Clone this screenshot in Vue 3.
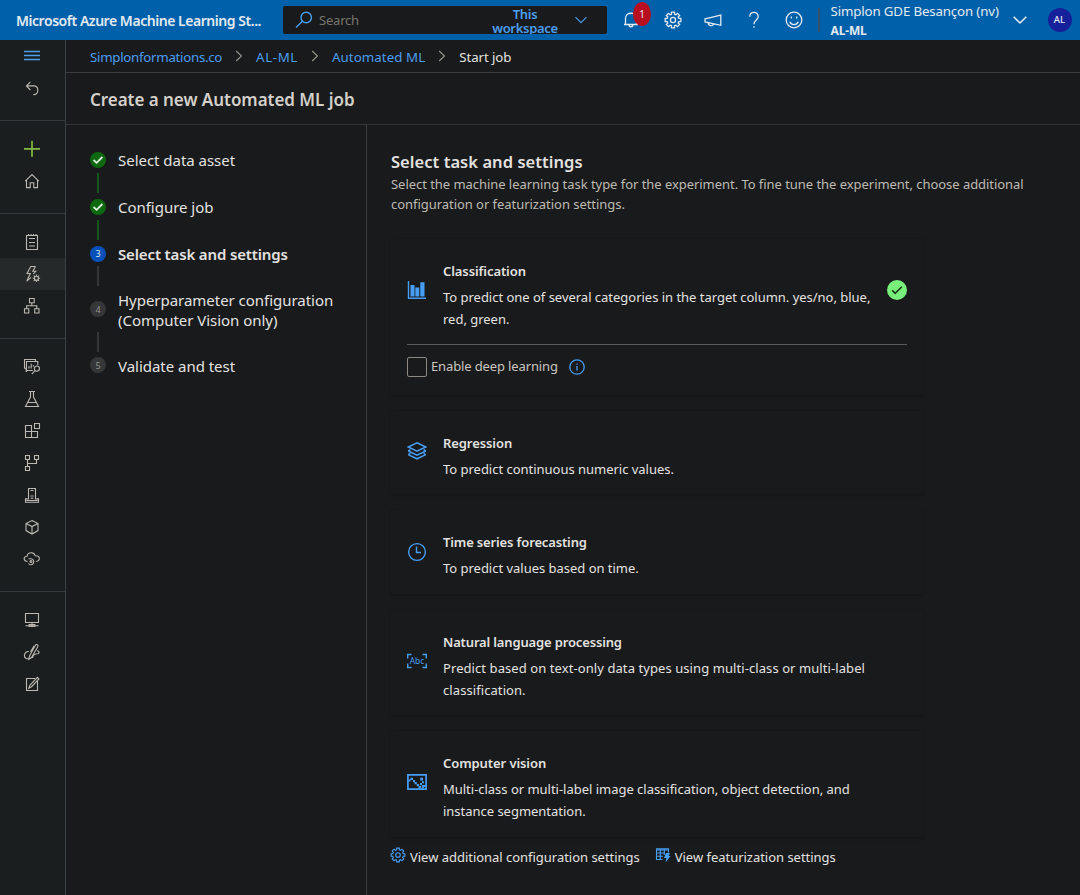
<script setup>
const gear = (cx, cy, ro, ri) => {
  const pts = []
  for (let i = 0; i < 8; i++) {
    const a = (i * Math.PI) / 4
    const add = (r, o) => pts.push(`${(cx + r * Math.cos(a + o)).toFixed(2)} ${(cy + r * Math.sin(a + o)).toFixed(2)}`)
    add(ri, -0.26)
    add(ro, -0.19)
    add(ro, 0.19)
    add(ri, 0.26)
  }
  return `M${pts.join('L')}Z`
}
const circle = (cx, cy, r) => `M${cx - r} ${cy}a${r} ${r} 0 1 0 ${2 * r} 0a${r} ${r} 0 1 0 ${-2 * r} 0`
const cog = (cx, cy, r, len) => {
  let d = circle(cx, cy, r)
  for (let i = 0; i < 8; i++) {
    const a = (i * Math.PI) / 4
    const p = (k) => `${(cx + k * Math.cos(a)).toFixed(2)} ${(cy + k * Math.sin(a)).toFixed(2)}`
    d += `M${p(r)}L${p(r + len)}`
  }
  return d
}

const navGroups = [
  [
    { id: 'menu', cls: 'menu', d: 'M2 5.5H18M2 9.5H18M2 13.5H18' },
    { id: 'back', d: 'M8.4 3.8 4.4 7.9 8.4 12M4.4 7.9H11.6C14.4 7.9 15.8 9.8 15.8 12.3 15.8 15 14.2 16.7 11.2 16.7' }
  ],
  [
    { id: 'new', cls: 'new', d: 'M2 9.8H18M10 1.8V17.8' },
    { id: 'home', d: 'M3.2 10.2 10 3.5 16.8 10.2M4.5 9.2V16.6H8.2V11.8H11.8V16.6H15.5V9.2' }
  ],
  [
    { id: 'notebooks', d: 'M4.5 3.5H15.5V17.5H4.5ZM6.5 2V4M9 2V4M11.5 2V4M14 2V4M7 6.5H13M7 10.5H13M7 14H13' },
    { id: 'automl', active: true, d: `M13.5 2.5H8.8L5 9.5H8.2L4.8 17.2 9 13.3M13.5 2.5 10.8 7.2H13.8L11.3 10${cog(14.4, 14.2, 2, 1.7)}` },
    { id: 'designer', d: 'M7.5 2.5H12.2V6.8H7.5ZM2.5 12.7H6.8V17H2.5ZM12.7 12.7H17V17H12.7ZM9.8 6.8V9.8M4.7 12.7V9.8H14.8V12.7' }
  ],
  [
    { id: 'data', d: `M5 14.5H4.2V11.2H2.5V2.5H13.5V4.3M10.8 13.5H4.5V4.5H15.8V8M7 11.5V9M9.2 11.5V6.8M11.3 9.5V8${circle(14.9, 11.6, 2.6)}M13 13.5 9.8 17.2` },
    { id: 'jobs', d: 'M7 2.5H13M8.5 2.5V8L3.5 17.5H16.5L11.5 8V2.5M5.5 13.5H14.5' },
    { id: 'components', d: 'M3.5 4.5H9.5V16.5H3.5ZM3.5 10.5H15.5V16.5H9.5M12.5 2.5H17.5V7.5H12.5Z' },
    { id: 'pipelines', d: 'M3.5 2.5H7.5V6.5H3.5ZM12.5 2.5H16.5V6.5H12.5ZM3.5 13.5H7.5V17.5H3.5ZM5.5 6.5V13.5M14.5 6.5V10.5H5.5' },
    { id: 'environments', d: 'M6.5 14.5V3.5H13.5V14.5M8.5 5.5H11.5M8.5 11H11.5M8.5 13.3H11.5M3.5 17.3V13.8H5V15.5H15V13.8H16.5V17.3Z' },
    { id: 'models', d: 'M10 3.5 16 6.5V13.6L10 17.1 4 13.6V6.5ZM4 6.5 10 9.6 16 6.5M10 9.6V17.1' },
    { id: 'endpoints', d: `M5.5 12.5C1 12.3 1.2 7.3 5 7.3 6 2.6 12.2 2.6 13.2 6.7 18.6 6.5 18.7 12.2 14 12.5M6.5 9.7H8.7A3 3 0 1 1 6.4 14.5${circle(9, 12.5, 1)}` }
  ],
  [
    { id: 'compute', d: 'M3.5 3.5H16.5V12.5H3.5ZM10 12.5V15.3M3.5 15.8H16.5M7.2 16.5V14.5H12.8V16.5Z' },
    { id: 'linked', d: 'M13.8 2.6C15.5 2 16.7 3.8 15.5 5.2L9.5 15.5 6.8 17.2 7.6 13.8ZM6.8 9.5C2.3 9 .8 15.5 4.8 16.7H6.8M12.2 3.8 8.5 9.8M15 8.8C17.5 8.5 17.8 11.5 15.6 11.8 12.5 12 10.6 13.5 10.6 16' },
    { id: 'labeling', d: 'M13 4.5H4.5V16.5H15.5V7M6.8 14.3 8 11 15.4 3.4 16.9 5 9.8 12.5Z' }
  ]
]

const crumbs = [
  { text: 'Simplonformations.co', cls: 'c1' },
  { text: 'AL-ML', cls: 'c2' },
  { text: 'Automated ML', cls: 'c3' },
  { text: 'Start job', cls: 'c4' }
]

const steps = [
  { text: 'Select data asset', state: 'done' },
  { text: 'Configure job', state: 'done' },
  { text: 'Select task and settings', state: 'current' },
  { text: 'Hyperparameter configuration (Computer Vision only)', state: 'todo' },
  { text: 'Validate and test', state: 'todo' }
]

const tasks = [
  { id: 'classification', title: 'Classification', desc: 'To predict one of several categories in the target column. yes/no, blue, red, green.', selected: true },
  { id: 'regression', title: 'Regression', desc: 'To predict continuous numeric values.' },
  { id: 'forecast', title: 'Time series forecasting', desc: 'To predict values based on time.' },
  { id: 'nlp', title: 'Natural language processing', desc: 'Predict based on text-only data types using multi-class or multi-label classification.' },
  { id: 'vision', title: 'Computer vision', desc: 'Multi-class or multi-label image classification, object detection, and instance segmentation.' }
]
</script>

<template>
  <div class="app">
    <header class="top">
      <div class="brand">Microsoft Azure Machine Learning St...</div>
      <div class="search">
        <svg class="mag" width="18" height="18" viewBox="0 0 18 18"><circle cx="11.2" cy="6.5" r="5.2" /><path d="M7.4 10.2 1 16.6" /></svg>
        <span class="placeholder">Search</span>
        <span class="scope">This workspace</span>
        <svg class="chev" width="14" height="8" viewBox="0 0 14 8"><path d="M1.5 1.2 7 6.7 12.5 1.2" /></svg>
      </div>
      <div class="tools">
        <div class="tool bell">
          <svg width="20" height="20" viewBox="0 0 20 20"><path d="M3 14.5H17M4.5 14.5V8.5C4.5 1.5 15.5 1.5 15.5 8.5V14.5M8 14.8C8 17.4 12 17.4 12 14.8" /></svg>
          <span class="badge">1</span>
        </div>
        <div class="tool"><svg width="20" height="20" viewBox="0 0 20 20"><path :d="gear(10, 10, 8, 6)" /><circle cx="10" cy="10" r="2.6" /></svg></div>
        <div class="tool"><svg width="20" height="20" viewBox="0 0 20 20"><path d="M2 8.8 17.8 5V15.3L2 12ZM5.3 12.8C5 16 9.8 16.8 10.6 13.9" /></svg></div>
        <div class="tool"><svg width="20" height="20" viewBox="0 0 20 20"><path d="M5.8 6.8C5.8 1 14.2 1 14.2 6.6 14.2 10.2 10 10 10 14.3M10 16.2V17.8" /></svg></div>
        <div class="tool"><svg width="20" height="20" viewBox="0 0 20 20"><circle cx="10" cy="10" r="7.8" /><path d="M5.8 11.8C7.2 15.5 12.8 15.5 14.2 11.8" /><path class="dots" d="M7.3 6.6V8.6M12.7 6.6V8.6" /></svg></div>
      </div>
      <div class="account">
        <div class="tenant">Simplon GDE Besançon (nv)</div>
        <div class="ws">AL-ML</div>
      </div>
      <svg class="acc-chev" width="16" height="10" viewBox="0 0 16 10"><path d="M1.7 1.8 8 8 14.3 1.8" /></svg>
      <div class="avatar">AL</div>
    </header>

    <div class="body">
      <nav class="rail">
        <div v-for="(g, gi) in navGroups" :key="gi" class="group">
          <div v-for="n in g" :key="n.id" class="nav" :class="[n.cls, { active: n.active }]">
            <svg width="20" height="20" viewBox="0 0 20 20"><path :d="n.d" /></svg>
          </div>
        </div>
      </nav>

      <main class="main">
        <div class="crumbs">
          <template v-for="(c, i) in crumbs" :key="c.text">
            <svg v-if="i" class="sep" width="8" height="12" viewBox="0 0 8 12"><path d="M1.2 1 6.5 6 1.2 11" /></svg>
            <span class="crumb" :class="c.cls">{{ c.text }}</span>
          </template>
        </div>
        <h1>Create a new Automated ML job</h1>

        <div class="wizard">
          <aside class="steps">
            <div v-for="(s, i) in steps" :key="s.text" class="step" :class="s.state">
              <div class="head">
                <span class="dot">
                  <svg v-if="s.state === 'done'" width="12" height="10" viewBox="0 0 12 10"><path d="M1.6 5 4.6 7.8 10.4 2" /></svg>
                  <template v-else>{{ i + 1 }}</template>
                </span>
                <span class="label">{{ s.text }}</span>
              </div>
              <div v-if="i < steps.length - 1" class="line"></div>
            </div>
          </aside>

          <section class="content">
            <h2>Select task and settings</h2>
            <p class="intro">Select the machine learning task type for the experiment. To fine tune the experiment, choose additional configuration or featurization settings.</p>

            <div class="cards">
              <article v-for="t in tasks" :key="t.id" class="card" :class="t.id">
                <div class="row">
                  <svg class="ticon" width="20" height="20" viewBox="0 0 20 20">
                    <template v-if="t.id === 'classification'">
                      <path d="M1.5 1V18.3H19" />
                      <path class="solid" d="M3.5 5H7.5V16.5H3.5ZM8.3 7.5H12.3V16.5H8.3ZM13.3 2.2H17.5V16.5H13.3Z" />
                    </template>
                    <path v-else-if="t.id === 'regression'" class="bold" d="M10 1.8 18.8 6 10 10.2 1.2 6ZM1.2 10 10 14.2 18.8 10M1.2 13.6 10 17.8 18.8 13.6M1.2 10 3.4 8.6M18.8 10 16.6 8.6M1.2 13.6 3.4 12.4M18.8 13.6 16.6 12.4" />
                    <template v-else-if="t.id === 'forecast'">
                      <circle cx="10" cy="10" r="8.4" />
                      <path d="M9.5 4.5V10.5H14" />
                    </template>
                    <template v-else-if="t.id === 'nlp'">
                      <path d="M4.5 3.5H.7V7.5M.7 12.5V16.5H4.5M15.5 3.5H19.3V7.5M19.3 12.5V16.5H15.5" />
                      <text x="10" y="13.2" text-anchor="middle" textLength="14.5" lengthAdjust="spacingAndGlyphs">Abc</text>
                    </template>
                    <template v-else>
                      <path class="frame" d="M.9 2.9H19.1V17.1H.9Z" />
                      <path class="solid" d="M1.5 7.5H3.5V9.5H1.5ZM3.5 5.8H6V8H3.5ZM6 8H8V10.2H6ZM7.6 10H9.8V12.2H7.6ZM9.8 12H12V14.2H9.8ZM11.5 14H14V16.5H11.5ZM13.2 5.8H16V8.4H13.2ZM13 11H15V13.2H13ZM15 9.2H17V11.2H15ZM15 13H18.5V15H16.8V16.5H14.8V14H15Z" />
                    </template>
                  </svg>
                  <div class="txt">
                    <h3>{{ t.title }}</h3>
                    <p>{{ t.desc }}</p>
                  </div>
                  <span v-if="t.selected" class="picked"><svg width="12" height="10" viewBox="0 0 12 10"><path d="M1.2 5.4 4.2 8.4 10.8 1.8" /></svg></span>
                </div>
                <div v-if="t.selected" class="option">
                  <span class="box"></span>
                  <span class="opt-label">Enable deep learning</span>
                  <svg class="info" width="16" height="16" viewBox="0 0 16 16"><circle cx="8" cy="8" r="7.2" /><path d="M8 7V11.5M8 4.5V5.7" /></svg>
                </div>
              </article>
            </div>

            <div class="links">
              <svg width="16" height="16" viewBox="0 0 16 16"><path :d="gear(8, 8, 7, 5.4)" /><circle cx="8" cy="8" r="2.3" /></svg>
              <span class="l1">View additional configuration settings</span>
              <svg class="second" width="16" height="16" viewBox="0 0 16 16"><path d="M7.5 12.5H1.5V1.8H13.5V5.5M1.5 3H13.5M1.5 6H10M1.5 9.2H8M5.3 2V12.5M9.3 2V8" /><path class="solid" d="M11 6H15L13.6 9H15.6L10.5 15.5 11.3 11H9Z" /></svg>
              <span class="l2">View featurization settings</span>
            </div>
          </section>
        </div>
      </main>
    </div>
  </div>
</template>

<style>
html,
body {
  background: #191a1b;
}
</style>

<style scoped>
.app {
  width: 1080px;
  height: 895px;
  display: flex;
  flex-direction: column;
  overflow: hidden;
  background: #191a1b;
  color: #e3e2e0;
  font-family: "Noto Sans", "Open Sans", sans-serif;
  font-size: 13px;
  white-space: nowrap;
}
svg {
  display: block;
  flex: none;
  fill: none;
  stroke: currentColor;
  stroke-width: 1.1;
}
h1, h2, h3, p { margin: 0; }
.top {
  height: 40px;
  flex: none;
  display: flex;
  align-items: center;
  background: #0060aa;
  color: #e2eaf0;
}
.brand {
  width: 267px;
  padding-left: 16px;
  padding-top: 1px;
  font-size: 14px;
  font-weight: 600;
  letter-spacing: -0.46px;
}
.search {
  width: 324px;
  height: 28px;
  display: flex;
  align-items: center;
  background: #191a1b;
  border-radius: 2px;
  overflow: hidden;
  color: #4b9ef0;
}
.mag { margin-left: 12px; stroke-width: 1.4; }
.placeholder { margin-left: 6px; width: 166px; color: #77756f; letter-spacing: -0.2px; }
.scope {
  width: 80px;
  white-space: normal;
  text-align: center;
  font-weight: 600;
  line-height: 14px;
  letter-spacing: -0.3px;
  padding-top: 1px;
}
.chev { margin-left: 9px; }
.tools { display: flex; margin-left: 5px; }
.tool { width: 40.5px; display: flex; justify-content: center; position: relative; }
.tool svg { stroke-width: 1.3; }
.tool.bell svg { margin-left: -2px; }
.badge {
  position: absolute;
  left: 21px;
  top: -8px;
  width: 18px;
  height: 24px;
  border-radius: 50%;
  background: #b80f20;
  font-size: 10px;
  line-height: 24px;
  text-align: center;
}
.account {
  width: 186px;
  height: 24px;
  margin-left: 3px;
  padding-left: 11px;
  border-left: 2px solid #34516b;
  box-sizing: border-box;
  display: flex;
  flex-direction: column;
  justify-content: center;
}
.tenant { padding-top: 2px; line-height: 19px; font-size: 13.3px; letter-spacing: -0.15px; }
.ws { line-height: 19px; font-weight: 700; font-size: 12px; letter-spacing: -0.15px; }
.acc-chev { margin-left: 8px; stroke-width: 1.6; }
.avatar {
  width: 24px;
  height: 24px;
  margin-left: 20px;
  border-radius: 50%;
  background: #16209a;
  font-size: 9.5px;
  font-weight: 500;
  line-height: 24px;
  text-align: center;
}
.body { flex: 1; display: flex; min-height: 0; }
.rail {
  width: 65px;
  flex: none;
  background: #1b1e1e;
  border-right: 1px solid #3a4142;
  color: #bcb9b2;
}
.group { padding: 12px 0 16px; border-bottom: 1px solid #343a3b; }
.group:first-child { padding-top: 0; }
.group:last-child { border-bottom: 0; }
.nav { height: 32px; display: flex; align-items: center; padding-left: 22px; }
.nav.active { background: #262929; }
.nav.menu { color: #4b9ef0; }
.nav.menu svg { stroke-width: 1.3; }
.nav.new { color: #85b946; }
.nav.new svg { stroke-width: 1.7; }
.main { flex: 1; display: flex; flex-direction: column; min-width: 0; }
.crumbs {
  height: 32px;
  flex: none;
  display: flex;
  align-items: center;
  padding-left: 24px;
  border-bottom: 1px solid #3b3c3d;
  color: #4b9ef0;
  font-size: 13.3px;
}
.crumb { padding-top: 2px; }
.sep { margin: 0 13px; color: #98958d; }
.c1 { letter-spacing: -0.29px; }
.c2 { letter-spacing: 0.6px; }
.c3 { letter-spacing: 0.08px; }
.c4 { color: #e3e2e0; letter-spacing: -0.1px; }
h1 {
  height: 51px;
  flex: none;
  padding-left: 24px;
  border-bottom: 1px solid #343637;
  font-size: 17px;
  font-weight: 600;
  line-height: 53px;
  letter-spacing: -0.04px;
  color: #d3d0ca;
}
.wizard { flex: 1; display: flex; min-height: 0; }
.steps {
  width: 276px;
  flex: none;
  padding: 25px 0 0 24px;
  border-right: 1px solid #3b3c3d;
}
.head { display: flex; align-items: center; gap: 12px; }
.dot {
  width: 16px;
  height: 16px;
  border-radius: 50%;
  display: flex;
  align-items: center;
  justify-content: center;
  background: #353637;
  color: #94928d;
  font-size: 9px;
}
.done .dot { background: #0e680f; color: #dff0df; }
.done svg { stroke-width: 1.8; }
.current .dot { background: #0650b8; color: #dfe8f4; margin-top: -1px; }
.todo .dot { margin-top: -2px; }
.label { width: 230px; white-space: normal; font-size: 15px; line-height: 20px; letter-spacing: -0.03px; }
.current .label { font-weight: 600; letter-spacing: -0.14px; }
.line { width: 2px; height: 20px; margin: 3px 0 4px 7px; background: #353637; }
.done .line { background: #17551a; }
.step:nth-child(3) .line { margin: 2px 0 4px 7px; }
.step:nth-child(4) .line { margin-top: 2px; }
.content { padding: 25px 0 0 24px; flex: 1; }
h2 { font-size: 16.5px; font-weight: 600; line-height: 24px; letter-spacing: 0.05px; }
.intro { width: 650px; white-space: normal; line-height: 20px; color: #bdbab4; letter-spacing: -0.045px; }
.cards { display: flex; flex-direction: column; gap: 16px; margin-top: 25px; width: 532px; }
.card {
  padding: 22px 16px 14.5px;
  border-radius: 2px;
  background: #191a1b;
  box-shadow: 0 1.6px 3.6px rgba(0, 0, 0, 0.1), 0 0.3px 0.9px rgba(0, 0, 0, 0.06);
}
.row { display: flex; align-items: center; }
.ticon { margin-top: -11px; color: #479ef5; stroke-width: 1.4; }
.forecast .ticon { margin-top: -8px; }
.ticon text { font-size: 9px; fill: currentColor; stroke: none; }
.frame { stroke-width: 1.7; }
.bold { stroke-width: 1.5; }
.solid { fill: currentColor; stroke: none; }
.txt { width: 436px; margin-left: 16px; }
h3 { font-size: 13px; font-weight: 600; line-height: 20px; letter-spacing: -0.08px; }
.nlp h3 { letter-spacing: -0.15px; }
.forecast h3 { letter-spacing: -0.14px; }
.txt p { margin-top: 5px; line-height: 22px; white-space: normal; letter-spacing: -0.02px; }
.nlp .txt p { letter-spacing: 0.08px; }
.picked {
  width: 20px;
  height: 20px;
  margin: -11px 0 0 8px;
  border-radius: 50%;
  background: #79ef7b;
  color: #1b3a1c;
  display: flex;
  align-items: center;
  justify-content: center;
}
.picked svg { stroke-width: 1.6; }
.option {
  margin-top: 14px;
  border-top: 1px solid #5b5b5a;
  padding-top: 12px;
  height: 23px;
  display: flex;
  color: #c9c6c0;
}
.box { width: 18px; height: 18px; border: 1px solid #8b8982; border-radius: 2px; }
.opt-label { margin-left: 4px; line-height: 19px; letter-spacing: -0.13px; }
.info { margin: 2px 0 0 11px; color: #479ef5; stroke-width: 1.3; }
.links { display: flex; align-items: center; margin-top: 9px; height: 22px; letter-spacing: -0.025px; }
.links svg { margin-top: -4px; margin-left: -1px; margin-right: 4px; color: #479ef5; }
.links .second { margin-left: 15px; }
</style>
